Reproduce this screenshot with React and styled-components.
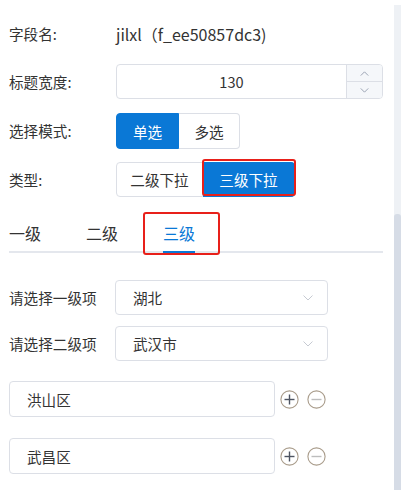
import React from "react";
import styled, { createGlobalStyle } from "styled-components";

const Global = createGlobalStyle`
  html, body { margin: 0; padding: 0; background: #fff; }
  body { font-family: "Noto Sans CJK SC", "Noto Sans", sans-serif; color: #333; }
  * { box-sizing: border-box; }
`;

const Page = styled.div`
  position: relative;
  width: 401px;
  height: 490px;
  overflow: hidden;
  padding: 16px 18px 0 9px;
  display: flex;
  flex-direction: column;
`;

const ScrollTrack = styled.div`
  position: absolute;
  top: 5px;
  right: 0;
  bottom: 0;
  width: 7px;
  background: #eef1f5;
`;

const ScrollThumb = styled.div`
  position: absolute;
  top: 209px;
  left: 0;
  right: 0;
  bottom: 0;
  background: #d6dce6;
  border-radius: 3px 3px 0 0;
`;

const FormRow = styled.div`
  display: flex;
  align-items: center;
  height: ${(p) => p.$h}px;
  margin-bottom: ${(p) => p.$mb || 0}px;
`;

const Label = styled.div`
  width: ${(p) => p.$w || 107}px;
  flex: none;
  font-size: 14.6px;
  color: #333;
  line-height: 20px;
`;

const Value = styled.div`
  font-size: 16px;
  color: #333;
  line-height: 22px;
`;

const NumberBox = styled.div`
  width: 267px;
  height: 35px;
  border: 1px solid #dcdfe6;
  border-radius: 4px;
  display: flex;
  overflow: hidden;
`;

const NumberValue = styled.div`
  flex: 1;
  display: flex;
  align-items: center;
  justify-content: center;
  font-size: 14.6px;
  color: #333;
`;

const Spinner = styled.div`
  width: 36px;
  border-left: 1px solid #dcdfe6;
  background: #f5f7fa;
  display: flex;
  flex-direction: column;
`;

const SpinBtn = styled.div`
  flex: 1;
  display: flex;
  align-items: center;
  justify-content: center;
  border-top: ${(p) => (p.$second ? "1px solid #dcdfe6" : "none")};
`;

const Group = styled.div`
  display: flex;
  height: ${(p) => p.$h}px;
`;

const SegBtn = styled.div`
  position: relative;
  width: ${(p) => p.$w}px;
  height: 100%;
  display: flex;
  align-items: center;
  justify-content: center;
  font-size: 14.6px;
  background: ${(p) => (p.$active ? "#0a78d6" : "#fff")};
  color: ${(p) => (p.$active ? "#fff" : "#333")};
  border: 1px solid ${(p) => (p.$active ? "#0a78d6" : "#dcdfe6")};
  border-left-width: ${(p) => (p.$first ? 1 : 0)}px;
  border-radius: ${(p) => (p.$first ? "4px 0 0 4px" : "0 4px 4px 0")};
`;

const Highlight = styled.div`
  position: absolute;
  top: ${(p) => p.$t}px;
  left: ${(p) => p.$l}px;
  right: ${(p) => p.$r}px;
  bottom: ${(p) => p.$b}px;
  border: 2px solid #e8201a;
  border-radius: 3px;
  pointer-events: none;
`;

const TabBar = styled.div`
  display: flex;
  gap: 45px;
  margin-top: 25px;
  width: 374px;
  border-bottom: 2px solid #e4e7ed;
`;

const Tab = styled.div`
  position: relative;
  font-size: 16px;
  line-height: 22px;
  padding-bottom: 7px;
  margin-bottom: -2px;
  color: ${(p) => (p.$active ? "#0a78d6" : "#333")};
  border-bottom: 2px solid ${(p) => (p.$active ? "#0a78d6" : "transparent")};
`;

const SelectRows = styled.div`
  display: flex;
  flex-direction: column;
  gap: 11px;
  margin-top: 27px;
`;

const SelectBox = styled.div`
  width: 213px;
  height: 35px;
  border: 1px solid #dcdfe6;
  border-radius: 4px;
  display: flex;
  align-items: center;
  justify-content: space-between;
  padding: 0 14px 0 17px;
  font-size: 14.6px;
  color: #333;
`;

const ItemList = styled.div`
  display: flex;
  flex-direction: column;
  gap: 21px;
  margin-top: 20px;
`;

const ItemRow = styled.div`
  display: flex;
  align-items: center;
  height: 36px;
`;

const TextInput = styled.div`
  width: 266px;
  height: 36px;
  border: 1px solid #dcdfe6;
  border-radius: 4px;
  display: flex;
  align-items: center;
  padding-left: 17px;
  font-size: 14.6px;
  color: #333;
`;

const Icons = styled.div`
  display: flex;
  gap: 8px;
  margin-left: 5px;
`;

const Chevron = ({ up, color = "#8a94a6", w = 10, h = 6 }) => (
  <svg width={w} height={h} viewBox="0 0 10 6">
    <path
      d={up ? "M0.5 5.5 L5 1 L9.5 5.5" : "M0.5 0.5 L5 5 L9.5 0.5"}
      fill="none"
      stroke={color}
      strokeWidth="1"
    />
  </svg>
);

const CircleIcon = ({ plus }) => (
  <svg width="19" height="19" viewBox="0 0 19 19">
    <circle cx="9.5" cy="9.5" r="8.6" fill="none" stroke="#a99c8b" strokeWidth="1.1" />
    <path d="M4.5 9.5 H14.5" stroke={plus ? "#4e5462" : "#bdbdbd"} strokeWidth="1.4" />
    {plus && <path d="M9.5 4.5 V14.5" stroke="#4e5462" strokeWidth="1.4" />}
  </svg>
);

export default function App() {
  return (
    <>
      <Global />
      <Page>
        <FormRow $h={36} $mb={12}>
          <Label>字段名:</Label>
          <Value>jilxl（f_ee50857dc3)</Value>
        </FormRow>
        <FormRow $h={35} $mb={14}>
          <Label>标题宽度:</Label>
          <NumberBox>
            <NumberValue>130</NumberValue>
            <Spinner>
              <SpinBtn>
                <Chevron up w={9} h={5} />
              </SpinBtn>
              <SpinBtn $second>
                <Chevron w={9} h={5} />
              </SpinBtn>
            </Spinner>
          </NumberBox>
        </FormRow>
        <FormRow $h={36} $mb={13}>
          <Label>选择模式:</Label>
          <Group $h={36}>
            <SegBtn $w={63} $first $active>单选</SegBtn>
            <SegBtn $w={61}>多选</SegBtn>
          </Group>
        </FormRow>
        <FormRow $h={35}>
          <Label>类型:</Label>
          <Group $h={35}>
            <SegBtn $w={87} $first>二级下拉</SegBtn>
            <SegBtn $w={92} $active>
              三级下拉
              <Highlight $t={-4} $l={-1} $r={-2} $b={0} />
            </SegBtn>
          </Group>
        </FormRow>
        <TabBar>
          <Tab>一级</Tab>
          <Tab>二级</Tab>
          <Tab $active>
            三级
            <Highlight $t={-10} $l={-20} $r={-25} $b={-4} />
          </Tab>
        </TabBar>
        <SelectRows>
          <FormRow $h={35}>
            <Label $w={106}>请选择一级项</Label>
            <SelectBox>
              湖北
              <Chevron color="#c6cad2" />
            </SelectBox>
          </FormRow>
          <FormRow $h={35}>
            <Label $w={106}>请选择二级项</Label>
            <SelectBox>
              武汉市
              <Chevron color="#c6cad2" />
            </SelectBox>
          </FormRow>
        </SelectRows>
        <ItemList>
          {["洪山区", "武昌区"].map((t) => (
            <ItemRow key={t}>
              <TextInput>{t}</TextInput>
              <Icons>
                <CircleIcon plus />
                <CircleIcon />
              </Icons>
            </ItemRow>
          ))}
        </ItemList>
        <ScrollTrack>
          <ScrollThumb />
        </ScrollTrack>
      </Page>
    </>
  );
}
